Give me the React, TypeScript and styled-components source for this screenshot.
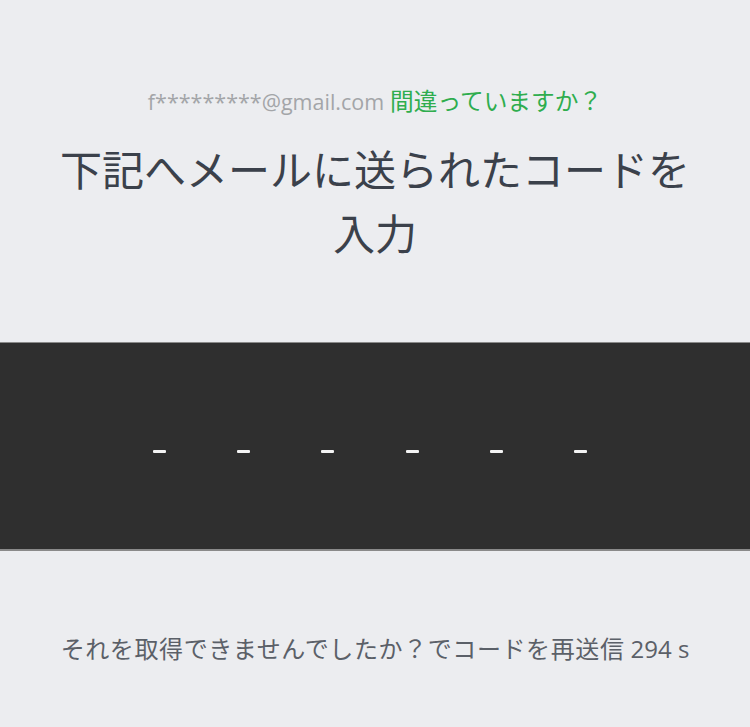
import styled, { createGlobalStyle } from 'styled-components';

const CODE_LENGTH = 6;

const GlobalStyle = createGlobalStyle`
  html, body {
    margin: 0;
    padding: 0;
    background: #ecedf0;
  }
  body {
    font-family: "Open Sans", "Noto Sans CJK JP", sans-serif;
  }
`;

const App = () => {
  const slots = Array.from({ length: CODE_LENGTH });

  return (
    <>
      <GlobalStyle />
      <Page>
        <Header>
          <EmailLine>
            <Email>f*********@gmail.com</Email>
            <ChangeLink href="#">間違っていますか？</ChangeLink>
          </EmailLine>
          <Title>下記へメールに送られたコードを入力</Title>
        </Header>
        <CodePanel>
          <CodeRow>
            {slots.map((_, i) => (
              <Slot key={i}>
                <Dash />
              </Slot>
            ))}
          </CodeRow>
        </CodePanel>
        <Footer>
          それを取得できませんでしたか？でコードを再送信 <Timer>294 s</Timer>
        </Footer>
      </Page>
    </>
  );
};

const Page = styled.div`
  width: 750px;
  min-height: 727px;
  display: flex;
  flex-direction: column;
  align-items: stretch;
`;

const Header = styled.div`
  padding: 85px 50px 0;
  height: 342px;
  flex-shrink: 0;
  box-sizing: border-box;
  display: flex;
  flex-direction: column;
  align-items: center;
`;

const EmailLine = styled.div`
  font-size: 21.5px;
  line-height: 30px;
  text-align: center;
  white-space: nowrap;
`;

const Email = styled.span`
  color: #a3a5a8;
  margin-right: 6px;
`;

const ChangeLink = styled.a`
  color: #2fad4e;
  text-decoration: none;
  font-family: "Noto Sans CJK JP", sans-serif;
  font-size: 23.7px;
`;

const Title = styled.h1`
  margin: 19px 0 0;
  max-width: 640px;
  font-family: "Noto Sans CJK JP", sans-serif;
  font-size: 42px;
  font-weight: 400;
  line-height: 64px;
  color: #3b414b;
  text-align: center;
`;

const CodePanel = styled.div`
  height: 206px;
  flex-shrink: 0;
  background: #2f2f2f;
  border-top: 1px solid #8a8a8a;
  border-bottom: 2px solid #8a8a8a;
  display: flex;
  align-items: center;
  justify-content: center;
`;

const CodeRow = styled.div`
  display: flex;
  padding: 10px 10px 0 0;
`;

const Slot = styled.div`
  width: 84.4px;
  height: 40px;
  display: flex;
  align-items: center;
  justify-content: center;
`;

const Dash = styled.span`
  width: 13px;
  height: 3px;
  background: #f4f4f4;
  border-radius: 1px;
`;

const Footer = styled.p`
  margin: 82px 0 0;
  font-family: "Noto Sans CJK JP", sans-serif;
  font-size: 24px;
  letter-spacing: 0.6px;
  line-height: 30px;
  color: #5b6068;
  text-align: center;
`;

const Timer = styled.span`
  font-family: "Open Sans", sans-serif;
  letter-spacing: 0;
`;

export default App;
